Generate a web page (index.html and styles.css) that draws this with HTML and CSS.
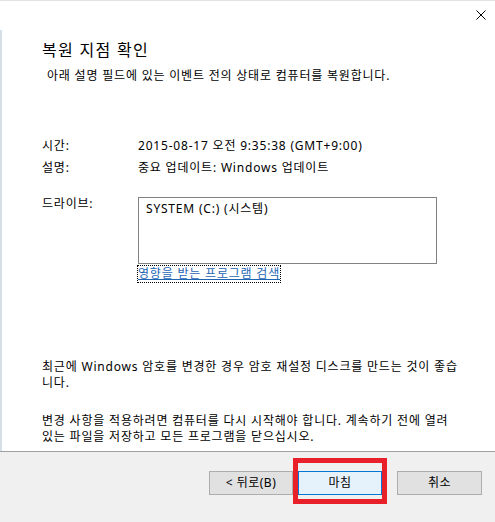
FILE: index.html
```html
<!DOCTYPE html>
<html lang="ko">
<head>
  <meta charset="UTF-8">
  <title>시스템 복원</title>
  <link rel="stylesheet" href="styles.css">
</head>
<body>

<div class="window">
  <div class="titlebar">
    <button class="close" aria-label="닫기">
      <svg width="10" height="10" viewBox="0 0 10 10">
        <path d="M0.5 0.5 L9.5 9.5 M9.5 0.5 L0.5 9.5" stroke="#000" stroke-width="1" fill="none"/>
      </svg>
    </button>
  </div>

  <div class="content">
    <h2>복원 지점 확인</h2>
    <p class="subtitle">아래 설명 필드에 있는 이벤트 전의 상태로 컴퓨터를 복원합니다.</p>

    <div class="info">
      <div class="label">시간:</div>
      <div class="value">2015-08-17 오전 9:35:38 (GMT+9:00)</div>
      <div class="label">설명:</div>
      <div class="value">중요 업데이트: Windows 업데이트</div>
      <div class="label drive-label">드라이브:</div>
      <div class="drive-col">
        <div class="drive-box">SYSTEM (C:) (시스템)</div>
        <a href="#" class="scan-link">영향을 받는 프로그램 검색</a>
      </div>
    </div>

    <p class="note first">최근에 Windows 암호를 변경한 경우 암호 재설정 디스크를 만드는 것이 좋습<br>니다.</p>
    <p class="note">변경 사항을 적용하려면 컴퓨터를 다시 시작해야 합니다. 계속하기 전에 열려<br>있는 파일을 저장하고 모든 프로그램을 닫으십시오.</p>
  </div>

  <div class="footer">
    <button class="btn">&lt; 뒤로(B)</button>
    <div class="highlight">
      <button class="btn primary">마침</button>
    </div>
    <button class="btn cancel">취소</button>
  </div>
</div>

</body>
</html>
```

FILE: styles.css
```css
body {
  margin: 0;
  font-family: "Noto Sans", "Noto Sans CJK KR", sans-serif;
  font-size: 12px;
  letter-spacing: 0.8px;
  color: #000;
  background-color: #fff;
}
.window {
  width: 495px;
  height: 522px;
  display: flex;
  flex-direction: column;
  overflow: hidden;
}
.titlebar {
  height: 29px;
  border-top: 1px solid #e3e3e3;
  display: flex;
  justify-content: flex-end;
  align-items: flex-start;
}
.close {
  border: none;
  background: none;
  padding: 0;
  margin: 9px 9px 0 0;
  width: 10px;
  height: 10px;
  line-height: 0;
}
.content {
  flex: 1;
  border-left: 2px solid #d5dfe7;
  padding: 10px 0 0 40px;
}
h2 {
  margin: 0;
  font-size: 16px;
  font-weight: normal;
  line-height: 20px;
  letter-spacing: 1.3px;
}
.subtitle {
  margin: 8px 0 0 5px;
  line-height: 16px;
}
.info {
  display: grid;
  grid-template-columns: 96px 299px;
  row-gap: 6px;
  margin-top: 54px;
  line-height: 16px;
}
.drive-label {
  margin-top: 14px;
}
.drive-col {
  margin-top: 15px;
}
.drive-box {
  height: 67px;
  border: 1px solid #828282;
  padding: 3px 7px;
  box-sizing: border-box;
}
.scan-link {
  display: inline-block;
  margin-top: 2px;
  color: #1e66b4;
  text-decoration: underline;
  outline: 1px dotted #000;
  outline-offset: 0;
}
.note {
  margin: 0;
  line-height: 16px;
}
.note.first {
  margin-top: 77px;
}
.note + .note {
  margin-top: 22px;
}
.footer {
  height: 51px;
  border-top: 1px solid #a0a0a0;
  background-color: #f0f0f0;
  display: flex;
  align-items: flex-start;
  padding: 19px 13px 0 0;
  justify-content: flex-end;
}
.btn {
  width: 84px;
  height: 24px;
  box-sizing: border-box;
  border: 1px solid #adadad;
  background-color: #e1e1e1;
  font-family: "Noto Sans", "Noto Sans CJK KR", sans-serif;
  font-size: 12px;
  letter-spacing: 0.5px;
  line-height: 16px;
  color: #000;
  padding: 0;
}
.btn.primary {
  border-color: #0078d7;
  background-color: #e5f1fb;
  display: block;
}
.btn.cancel {
  width: 85px;
  margin-left: 10px;
}
.highlight {
  border: 5px solid #e8202a;
  margin-top: -13px;
  padding: 8px 0 4px 0;
}
```
